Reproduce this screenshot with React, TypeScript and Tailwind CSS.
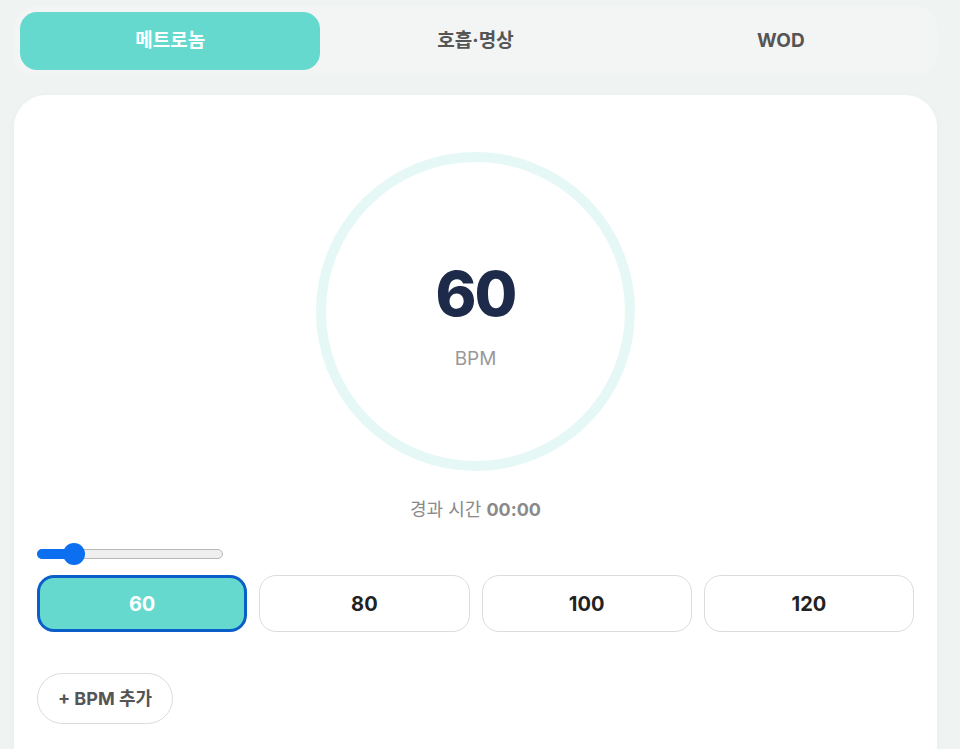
import React from "react";

const font = { fontFamily: 'Inter, "Noto Sans CJK KR", sans-serif' };

export default function App() {
  const tabs = ["메트로놈", "호흡·명상", "WOD"];
  const bpms = [60, 80, 100, 120];
  return (
    <div className="h-[749px] w-[960px] bg-[#eff4f3] pl-[14px] pr-[23px] pt-[6px] overflow-hidden" style={font}>
      <div className="flex gap-[5px] rounded-[22px] bg-[#f3f4f4] p-[6px]">
        {tabs.map((t, i) => (
          <div
            key={t}
            className={
              "flex h-[58px] flex-1 items-center justify-center rounded-[17px] text-[19px] font-bold " +
              (i === 0 ? "bg-[#66d9cf] text-white" : "text-[#555555]")
            }
          >
            {t}
          </div>
        ))}
      </div>
      <div className="mt-[19px] h-[654px] rounded-t-[32px] bg-white px-[23px] pt-[57px] shadow-[0_2px_10px_rgba(0,0,0,0.03)]">
        <div className="flex justify-center">
          <div className="flex h-[319px] w-[319px] flex-col items-center justify-center rounded-full border-[10px] border-[#e5f8f5] pt-[20px]">
            <div className="text-[62px] font-extrabold leading-none tracking-[-2px] text-[#1d2a4a] mt-[-6px]">60</div>
            <div className="mt-[20px] text-[19px] text-[#999999]">BPM</div>
          </div>
        </div>
        <div className="mt-[25px] text-center text-[18px] text-[#8a8a8a]">
          경과 시간 <span className="font-bold">00:00</span>
        </div>
        <div className="mt-[20px] relative h-[22px] w-[186px]">
          <div className="absolute left-0 right-0 top-[6px] h-[10px] rounded-full border border-[#b8b8b8] bg-[#efefef]"></div>
          <div className="absolute left-0 top-[6px] h-[10px] w-[40px] rounded-full bg-[#0b6ff0]"></div>
          <div className="absolute left-[26px] top-0 h-[22px] w-[22px] rounded-full bg-[#0b6ff0]"></div>
        </div>
        <div className="mt-[10px] grid grid-cols-4 gap-[12px]">
          {bpms.map((b, i) => (
            <div
              key={b}
              className={
                "flex h-[57px] items-center justify-center rounded-[17px] text-[20px] font-bold " +
                (i === 0
                  ? "border-[3px] border-[#0a5ec8] bg-[#66d9cf] text-white"
                  : "border-[1.5px] border-[#dcdcdc] bg-white text-[#222222]")
              }
            >
              {b}
            </div>
          ))}
        </div>
        <div className="mt-[41px] flex">
          <div className="flex h-[51px] w-[136px] items-center justify-center rounded-full border-[1.5px] border-[#dcdcdc] text-[18px] font-bold text-[#555555]">
            + BPM 추가
          </div>
        </div>
      </div>
    </div>
  );
}
